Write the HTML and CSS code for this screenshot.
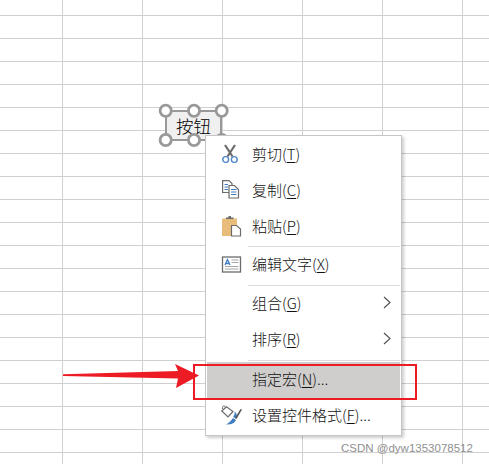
FILE: index.html
```html
<!DOCTYPE html>
<html lang="zh-CN">
<head>
<meta charset="utf-8">
<title>指定宏</title>
<link rel="stylesheet" href="styles.css">
</head>
<body>
<main class="sheet">
  <div class="shape">
    <div class="shape-button">按钮</div>
    <svg class="handles" width="70" height="46" viewBox="0 0 70 46">
      <circle cx="6.700" cy="6.700" r="5.600"/><circle cx="35" cy="6.700" r="5.600"/><circle cx="62.700" cy="6.700" r="5.600"/>
      <circle cx="6.700" cy="36" r="5.600"/><circle cx="35" cy="36" r="5.600"/><circle cx="62.700" cy="36" r="5.600"/>
    </svg>
  </div>

  <div class="menu">
    <div class="item">
      <svg class="icon" width="20" height="22" viewBox="0 -1 20 22">
        <path d="M3 0 L10.500 11.500 M13 0 L5.500 11.500" fill="none" stroke="#6b6b6b" stroke-width="2.200"/>
        <circle cx="3.700" cy="14.500" r="2.900" fill="none" stroke="#4f86c6" stroke-width="1.400"/>
        <circle cx="12.300" cy="14.500" r="2.900" fill="none" stroke="#4f86c6" stroke-width="1.400"/>
      </svg>
      <span class="label">剪切(<u>T</u>)</span>
    </div>
    <div class="item">
      <svg class="icon" width="20" height="22" viewBox="0 0 20 22">
        <path d="M0.600 0.600H7L10 3.500V12.500H0.600Z" fill="#fff" stroke="#6b6b6b" stroke-width="1.200"/>
        <path d="M7 5.500H12.500L16.500 9.500V18H7Z" fill="#fff" stroke="#6b6b6b" stroke-width="1.200"/>
        <path d="M2.500 4.500H6M2.500 7H6M2.500 9.500H6M9 9.500H14.500M9 12H14.500M9 14.500H14.500" stroke="#3f7cc0" stroke-width="1"/>
      </svg>
      <span class="label">复制(<u>C</u>)</span>
    </div>
    <div class="item">
      <svg class="icon" width="20" height="22" viewBox="1 1 20 22">
        <path d="M1 3.500H16V21H1Z" fill="#e8bd7c"/>
        <path d="M5 4V2.500H7.500V1H10V2.500H12.500V4Z" fill="#6b6b6b"/>
        <path d="M10.500 10.500H15.500L19.500 14V21H10.500Z" fill="#fff" stroke="#6b6b6b" stroke-width="1.200"/>
      </svg>
      <span class="label">粘贴(<u>P</u>)</span>
    </div>
    <div class="sep"></div>
    <div class="item">
      <svg class="icon" width="20" height="18" viewBox="1 0 20 18">
        <rect x="1.500" y="1" width="18" height="15" fill="#fff" stroke="#6b6b6b" stroke-width="1.300"/>
        <path d="M4 9 L6.500 3.500 L9 9 M5 7.500H8" fill="none" stroke="#3f7cc0" stroke-width="1.300"/>
        <path d="M10.500 4H17.500M10.500 6.500H17.500M4 10.500H17.500M4 13H17.500" stroke="#a6a6a6" stroke-width="1"/>
      </svg>
      <span class="label">编辑文字(<u>X</u>)</span>
    </div>
    <div class="sep sep-wide"></div>
    <div class="item">
      <span class="icon"></span>
      <span class="label">组合(<u>G</u>)</span>
      <svg class="chevron" width="8" height="13" viewBox="0 0 8 13"><path d="M1 1 L7 6.500 L1 12" fill="none" stroke="#555" stroke-width="1.200"/></svg>
    </div>
    <div class="item">
      <span class="icon"></span>
      <span class="label">排序(<u>R</u>)</span>
      <svg class="chevron" width="8" height="13" viewBox="0 0 8 13"><path d="M1 1 L7 6.500 L1 12" fill="none" stroke="#555" stroke-width="1.200"/></svg>
    </div>
    <div class="sep sep-wide sep-after"></div>
    <div class="item active">
      <span class="icon"></span>
      <span class="label">指定宏(<u>N</u>)...</span>
    </div>
    <div class="item">
      <svg class="icon icon-wide" width="22" height="22" viewBox="0 1 22 22">
        <path d="M0.800 7 L5.500 2.800 L12 7.500 L7 13Z" fill="#fff" stroke="#6b6b6b" stroke-width="1.200"/>
        <path d="M4.500 4 C4 0.800 1.200 1 1.500 5" fill="none" stroke="#6b6b6b" stroke-width="1"/>
        <path d="M13.500 7.500 C16 9 16.500 12 15 14.500 L12 13 C13.500 11.500 14 9.500 13.500 7.500Z" fill="#3f7cc0"/>
        <path d="M21 5.500 L15.500 15 L14 14 L19.500 5Z" fill="#555"/>
        <path d="M12 14 L15 16 C13 20 9.500 20.500 5 20.500 C8 19 10 17 12 14Z" fill="#3f7cc0"/>
      </svg>
      <span class="label">设置控件格式(<u>F</u>)...</span>
    </div>
  </div>

  <div class="callout"></div>
  <svg class="arrow" width="140" height="26" viewBox="0 0 140 26">
    <path d="M0 11.200 L115 8 L112 1 L136 12.500 L113 25 L115 15.500 L0 13Z" fill="#ed1c24"/>
  </svg>
  <div class="watermark">CSDN @dyw1353078512</div>
</main>
</body>
</html>
```

FILE: styles.css
```css
html, body {
  margin: 0;
  padding: 0;
}

.sheet {
  position: relative;
  width: 489px;
  height: 464px;
  overflow: hidden;
  background-color: #fff;
  background-image:
    linear-gradient(to right, #d0d0d0 1px, transparent 1px),
    linear-gradient(to bottom, #d0d0d0 1px, transparent 1px);
  background-size: 80px 23px;
  background-position: 62px 15px;
  font-family: "Noto Sans CJK SC", "Liberation Sans", sans-serif;
}

.shape {
  position: absolute;
  left: 159px;
  top: 104px;
  width: 70px;
  height: 46px;
}

.shape-button {
  position: absolute;
  left: 6px;
  top: 6px;
  width: 57px;
  height: 31px;
  box-sizing: border-box;
  border: 2px solid #999;
  background: #f0f0f0;
  display: flex;
  align-items: center;
  justify-content: center;
  font-size: 17.500px;
  font-weight: 300;
  color: #000;
}

.handles {
  position: absolute;
  left: 0;
  top: 0;
  overflow: visible;
}

.handles circle {
  fill: #fff;
  stroke: #999;
  stroke-width: 2.800;
}

.menu {
  position: absolute;
  left: 205px;
  top: 135px;
  width: 197px;
  height: 301px;
  box-sizing: border-box;
  padding: 1px 1px 0;
  background: #fff;
  border: 1px solid #c6c6c6;
  box-shadow: 2px 2px 3px rgba(0, 0, 0, 0.2);
  display: flex;
  flex-direction: column;
}

.item {
  position: relative;
  flex: 0 0 36px;
  display: flex;
  align-items: center;
}

.item .icon {
  flex: none;
  margin-left: 15px;
  width: 20px;
  overflow: visible;
}

.item span.icon {
  height: 20px;
}

.item .icon-wide {
  margin-left: 14px;
  margin-right: -1px;
  width: 22px;
}

.label {
  margin-left: 10px;
  padding-bottom: 3px;
  font-size: 15px;
  font-weight: 300;
  color: #111;
  white-space: nowrap;
}

.label u {
  text-underline-offset: 2px;
}

.chevron {
  position: absolute;
  right: 9px;
  top: 10px;
}

.active {
  background: #d0cecc;
}

.sep {
  flex: 0 0 1px;
  margin: 1px 0 0 41px;
  background: #dcdcdc;
}

.sep-wide {
  margin-top: 2px;
}

.sep-after {
  margin-bottom: 1px;
}

.callout {
  position: absolute;
  left: 193px;
  top: 364px;
  width: 224px;
  height: 36px;
  box-sizing: border-box;
  border: 2.500px solid #ed1c24;
}

.arrow {
  position: absolute;
  left: 63px;
  top: 363px;
}

.watermark {
  position: absolute;
  left: 341px;
  top: 441px;
  font-family: "Liberation Sans", sans-serif;
  font-size: 11.500px;
  line-height: 14px;
  color: #8f8f8f;
  white-space: nowrap;
}
```
